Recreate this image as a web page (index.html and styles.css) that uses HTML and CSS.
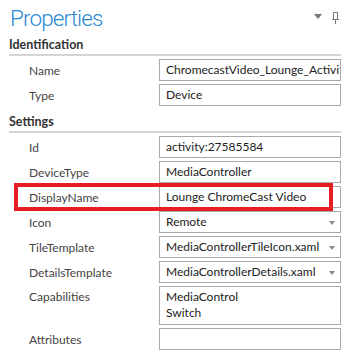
FILE: index.html
```html
<!DOCTYPE html>
<html lang="en">
<head>
  <meta charset="UTF-8">
  <title>Properties</title>
  <link rel="stylesheet" href="styles.css">
</head>
<body>
  <div class="panel">
    <div class="panel-head">
      <h1>Properties</h1>
      <div class="head-tools">
        <svg class="tool-menu" width="8" height="5" viewBox="0 0 8 5"><path d="M0 0H8L4 5Z" fill="#777"/></svg>
        <svg class="tool-pin" width="7" height="12" viewBox="0 0 7 12">
          <path d="M1.5 0.5H5.5V7.5H1.5Z" fill="none" stroke="#777"/>
          <path d="M0 7.5H7" stroke="#777"/>
          <path d="M3.5 8V12" stroke="#777"/>
        </svg>
      </div>
    </div>

    <div class="section">
      <div class="section-title">Identification</div>
      <div class="rows">
        <div class="row">
          <span class="label">Name</span>
          <div class="field">ChromecastVideo_Lounge_Activity</div>
        </div>
        <div class="row">
          <span class="label">Type</span>
          <div class="field">Device</div>
        </div>
      </div>
    </div>

    <div class="section">
      <div class="section-title">Settings</div>
      <div class="rows">
        <div class="row">
          <span class="label">Id</span>
          <div class="field">activity:27585584</div>
        </div>
        <div class="row">
          <span class="label">DeviceType</span>
          <div class="field">MediaController</div>
        </div>
        <div class="row highlight">
          <span class="label">DisplayName</span>
          <div class="field">Lounge ChromeCast Video</div>
        </div>
        <div class="row">
          <span class="label">Icon</span>
          <div class="field select">Remote</div>
        </div>
        <div class="row">
          <span class="label">TileTemplate</span>
          <div class="field select">MediaControllerTileIcon.xaml</div>
        </div>
        <div class="row">
          <span class="label">DetailsTemplate</span>
          <div class="field select">MediaControllerDetails.xaml</div>
        </div>
        <div class="row top">
          <span class="label">Capabilities</span>
          <div class="field multi">MediaControl<br>Switch</div>
        </div>
        <div class="row">
          <span class="label">Attributes</span>
          <div class="field"></div>
        </div>
      </div>
    </div>
    <div class="panel-foot"></div>
  </div>
</body>
</html>
```

FILE: styles.css
```css
html, body {
  margin: 0;
  padding: 0;
  background: #fff;
  font-family: 'Lato', 'Open Sans', sans-serif;
  color: #333;
}

.panel {
  width: 332px;
  margin-left: 9px;
}

.panel-head {
  display: flex;
  align-items: flex-start;
  justify-content: space-between;
  height: 37px;
}

.panel-head h1 {
  margin: 0;
  padding: 3px 0 0 1px;
  font-family: 'Roboto', 'Lato', sans-serif;
  font-size: 22.5px;
  font-weight: 300;
  line-height: 30px;
  letter-spacing: -0.9px;
  color: #2a88d2;
}

.head-tools {
  display: flex;
  align-items: flex-start;
  gap: 10px;
  padding: 12px 2px 0 0;
}

.tool-menu {
  margin-top: 2px;
}

.section-title {
  font-size: 12.5px;
  font-weight: 700;
  line-height: 16px;
  color: #333;
  padding-bottom: 1px;
  border-bottom: 2px solid #d4d4d4;
}

.rows {
  display: flex;
  flex-direction: column;
  gap: 3px;
  padding: 3px 0 8px;
}

.section:last-of-type .rows {
  padding-bottom: 3px;
}

.row {
  display: flex;
  align-items: center;
  position: relative;
}

.row.top {
  align-items: flex-start;
}

.row.top .label {
  padding-top: 3px;
}

.label {
  width: 130px;
  padding-left: 20px;
  font-size: 12px;
  color: #444;
}

.field {
  box-sizing: border-box;
  width: 182px;
  height: 22px;
  padding: 0 6px;
  border: 1px solid #a9a9a9;
  font-size: 12px;
  line-height: 20px;
  color: #222;
  white-space: nowrap;
  overflow: hidden;
}

.field.select {
  position: relative;
  padding-right: 16px;
}

.field.select::after {
  content: '';
  position: absolute;
  right: 5px;
  top: 9px;
  border-left: 3px solid transparent;
  border-right: 3px solid transparent;
  border-top: 4px solid #8a8a8a;
}

.field.multi {
  height: 39px;
  line-height: 16px;
  padding-top: 2px;
}

.highlight::before {
  content: '';
  position: absolute;
  left: 5px;
  top: -3px;
  width: 311px;
  height: 20px;
  border: 4px solid #e81c24;
}

.panel-foot {
  border-top: 2px solid #d4d4d4;
}
```
